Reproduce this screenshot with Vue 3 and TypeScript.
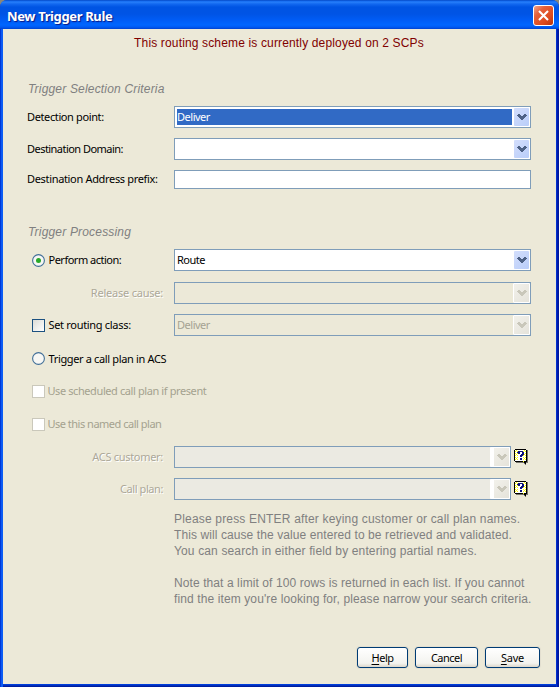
<script setup lang="ts">
import { ref } from 'vue'

interface Notice {
  text: string
  spacing: string
}

const action = ref<'perform' | 'plan'>('perform')
const notices: Notice[] = [
  { text: 'Please press ENTER after keying customer or call plan names.', spacing: 'n1' },
  { text: 'This will cause the value entered to be retrieved and validated.', spacing: 'n2' },
  { text: 'You can search in either field by entering partial names.', spacing: 'n3' },
  { text: '', spacing: '' },
  { text: 'Note that a limit of 100 rows is returned in each list. If you cannot', spacing: 'n4' },
  { text: "find the item you're looking for, please narrow your search criteria.", spacing: 'n5' },
]
const arrow = 'M1 0h2v1h1v1h2V1h1V0h2v1h1v1H9v1H8v1H7v1H6v1H4V5H3V4H2V3H1V2H0V1h1z'
</script>

<template>
  <div class="window">
    <header class="titlebar">
      <span class="title">New Trigger Rule</span>
      <button class="close" aria-label="Close">
        <svg width="11" height="11" viewBox="0 0 11 11"><path d="M1 1l9 9M10 1l-9 9" stroke="#fff" stroke-width="2.1" /></svg>
      </button>
    </header>
    <main class="body">
      <p class="status"><span>This routing scheme is currently deployed on 2 SCPs</span></p>

      <h2 class="section first"><span>Trigger Selection Criteria</span></h2>
      <div class="row r1">
        <label class="label"><span class="t-det">Detection point:</span></label>
        <div class="combo"><span class="value selected">Deliver</span><i class="drop"><svg width="10" height="6" viewBox="0 0 10 6"><path :d="arrow" /></svg></i></div>
      </div>
      <div class="row r2">
        <label class="label"><span class="t-dom">Destination Domain:</span></label>
        <div class="combo"><span class="value"></span><i class="drop"><svg width="10" height="6" viewBox="0 0 10 6"><path :d="arrow" /></svg></i></div>
      </div>
      <div class="row r3">
        <label class="label"><span class="t-pre">Destination Address prefix:</span></label>
        <div class="entry"></div>
      </div>

      <h2 class="section second"><span>Trigger Processing</span></h2>
      <div class="row r4">
        <div class="option" @click="action = 'perform'">
          <svg class="mark" width="13" height="13" viewBox="0 0 13 13"><circle cx="6.5" cy="6.5" r="5.9" fill="#f7f7f4" stroke="#416f98" stroke-width="1.1" /><circle v-if="action === 'perform'" cx="6.5" cy="6.5" r="2.5" fill="#29a929" /></svg>
          <span class="t-perf">Perform action:</span>
        </div>
        <div class="combo"><span class="value">Route</span><i class="drop"><svg width="10" height="6" viewBox="0 0 10 6"><path :d="arrow" /></svg></i></div>
      </div>
      <div class="row r5">
        <label class="label right embossed"><span class="t-rel">Release cause:</span></label>
        <div class="combo off"><span class="value"></span><i class="drop"><svg width="10" height="6" viewBox="0 0 10 6"><path :d="arrow" /></svg></i></div>
      </div>
      <div class="row r6">
        <div class="option"><i class="mark check"></i><span class="t-set">Set routing class:</span></div>
        <div class="combo off"><span class="value">Deliver</span><i class="drop"><svg width="10" height="6" viewBox="0 0 10 6"><path :d="arrow" /></svg></i></div>
      </div>
      <div class="row r7">
        <div class="option wide" @click="action = 'plan'">
          <svg class="mark" width="13" height="13" viewBox="0 0 13 13"><circle cx="6.5" cy="6.5" r="5.9" fill="#f7f7f4" stroke="#416f98" stroke-width="1.1" /><circle v-if="action === 'plan'" cx="6.5" cy="6.5" r="2.5" fill="#29a929" /></svg>
          <span class="t-trig">Trigger a call plan in ACS</span>
        </div>
      </div>
      <div class="row r8"><div class="option wide disabled"><i class="mark check"></i><span class="t-sch">Use scheduled call plan if present</span></div></div>
      <div class="row r9"><div class="option wide disabled"><i class="mark check"></i><span class="t-nam">Use this named call plan</span></div></div>
      <div v-for="name in ['ACS customer:', 'Call plan:']" :key="name" class="row plan">
        <label class="label right embossed"><span :class="name === 'Call plan:' ? 't-call' : 't-acs'">{{ name }}</span></label>
        <div class="combo off short"><span class="value"></span><i class="drop"><svg width="10" height="6" viewBox="0 0 10 6"><path :d="arrow" /></svg></i></div>
        <svg class="help" width="14" height="16" viewBox="0 0 14 16" shape-rendering="crispEdges">
          <path d="M2 1h12v13h-2v2h-1v-1h-1v-1H2z" fill="#77756b" />
          <path d="M1 0h11v1h1v12h-1v2h-1v-1h-1v-1H1v-1H0V1h1z" fill="#000" />
          <path d="M1 1h11v11H1z" fill="#fff" />
          <path d="M1.5 2v10M3.5 2v10M9.5 2v10M11.5 2v10" stroke="#ffff00" stroke-dasharray="1 1" />
          <path d="M2.5 1v10M10.5 1v10" stroke="#ffff00" stroke-dasharray="1 3" />
          <path d="M9 12h1v1H9z" fill="#ff0" />
          <path d="M4 2h5v1h1v3H9v1H8v1H6V6h1V5h1V3H6v2H4V4H3V3h1zM6 9h2v2H6z" fill="#0b1280" />
        </svg>
      </div>

      <div class="notices">
        <p v-for="(n, i) in notices" :key="i"><span :class="n.spacing">{{ n.text }}</span></p>
      </div>

      <footer class="buttons">
        <button class="btn b-help"><span><u>H</u>elp</span></button>
        <button class="btn b-cancel"><span>Cancel</span></button>
        <button class="btn b-save"><span><u>S</u>ave</span></button>
      </footer>
    </main>
  </div>
</template>

<style>
body { margin: 0; background: #8b8778; }
</style>

<style scoped>
* { box-sizing: border-box; }
p, h2 { margin: 0; font-weight: normal; }
span { white-space: nowrap; }
.window {
  width: 559px; height: 687px; display: flex; flex-direction: column;
  font: 11px/16px "Noto Sans", sans-serif; color: #000;
  background: linear-gradient(90deg, #0028c4 0, #0048e8 1px, #166aff 2px, #0050ea 3px, #0050ea 555px, #0042e8 556px, #001db8 557px, #001590 559px);
  border-radius: 7px 7px 0 0; overflow: hidden;
}
.titlebar {
  height: 29px; flex: none; display: flex; justify-content: space-between; padding: 5px 5px 0 7px;
  background: linear-gradient(#0847bd 0, #0f65ed 1px, #287ffa 2px, #1268f0 4px, #0054e3 7px, #0054e5 14px, #005cf5 20px, #0066ff 25px, #005bf4 27px, #0042d0 29px);
}
.title { font: bold 13px/22px "Noto Sans", sans-serif; color: #fff; text-shadow: 1px 1px 1px #0a1883; letter-spacing: -.36px; }
.close {
  width: 21px; height: 21px; padding: 0; display: grid; place-items: center;
  border: 1px solid #fff; border-radius: 3px;
  background: linear-gradient(135deg, #f0a48b, #e5603a 30%, #dd4a1e 70%, #b8330c);
}
.body {
  flex: 1; margin: 0 3px; padding: 0 24px; display: flex; flex-direction: column;
  background: linear-gradient(#0046e8, #001590) bottom / 100% 3px no-repeat, #ece9d8;
}
.status { height: 16px; margin-top: 6px; text-align: center; font: 12px/16px "Liberation Sans", sans-serif; color: #800000; letter-spacing: .15px; padding-right: 1px; }
.section { height: 16px; font: italic 12px/16px "Liberation Sans", sans-serif; color: #808080; padding-left: 1px; letter-spacing: .18px; }
.first { margin-top: 30px; }
.second { margin-top: 35px; }
.row { display: flex; height: 22px; flex: none; }
.r1 { margin-top: 9px; }
.r2, .r3 { margin-top: 10px; }
.r3 { height: 19px; }
.r4 { margin-top: 9px; }
.r5 { margin-top: 11px; }
.r6 { margin-top: 10px; }
.r7, .r8, .r9 { height: 21px; margin-top: 12px; }
.plan { margin-top: 10px; }
.r9 + .plan { margin-top: 11px; }
.label { flex: none; width: 147px; line-height: 22px; }
.r3 .label { line-height: 18px; }
.right { padding-right: 11px; text-align: right; }
.embossed { color: #aca899; text-shadow: 1px 1px 0 #fff; }
.option { flex: none; width: 147px; padding-left: 5px; display: flex; gap: 3.5px; line-height: 21px; }
.option.wide { width: 400px; }
.mark { flex: none; width: 13px; height: 13px; margin-top: 5px; }
.r7 .mark, .r8 .mark, .r9 .mark { margin-top: 4px; }
.check { border: 1px solid #1c5180; background: linear-gradient(135deg, #dcdcd7, #fff); }
.disabled { color: #a4a28f; gap: 2.4px; }
.disabled .check { border-color: #cac8bb; background: #fff; }
.disabled span { line-height: 20px; }
.combo { width: 357px; height: 22px; border: 1px solid #7f9db9; background: #fff; display: flex; padding: 2px 1px 2px 2px; }
.entry { width: 357px; height: 19px; border: 1px solid #7f9db9; background: #fff; }
.short { width: 337px; }
.value { flex: 1; height: 16px; line-height: 16px; margin-right: 2px; letter-spacing: -.48px; }
.selected { background: #316ac5; color: #fff; }
.drop { width: 15px; height: 18px; margin-top: -1px; border-radius: 1px; background: linear-gradient(135deg, #d3defc, #b9cdf9); display: grid; place-items: center; }
.drop svg { fill: #4d6185; display: block; }
.off { background: #ece9d8; color: #a5a393; padding-right: 0; padding-top: 0; padding-bottom: 0; }
.off .value { margin: 2px 0 0; }
.off .drop { box-sizing: content-box; width: 15px; height: 18px; margin: 0; border: 1px solid #fff; background: linear-gradient(135deg, #f2f1eb, #e5e3da); }
.off .drop svg { fill: #c9c7ba; }
.short { background: #ebeae2; }
.short .drop { border-left-width: 4px; }
.help { margin: 3px 0 0 3px; }
.t-det { letter-spacing: -.38px; }
.t-dom { letter-spacing: -.54px; }
.t-pre { letter-spacing: -.33px; }
.t-perf { letter-spacing: -.5px; }
.t-rel { letter-spacing: -.22px; }
.t-set { letter-spacing: -.31px; }
.t-trig { letter-spacing: -.35px; }
.t-sch { letter-spacing: -.4px; }
.t-nam { letter-spacing: -.49px; }
.t-acs { letter-spacing: -.3px; }
.t-call { letter-spacing: -.42px; }
.notices { margin-top: 11px; padding-left: 147px; font: 12px/16px "Liberation Sans", sans-serif; color: #808080; }
.notices p { height: 16px; }
.n1 { letter-spacing: .18px; }
.n2 { letter-spacing: .09px; }
.n3 { letter-spacing: .14px; }
.n4 { letter-spacing: .09px; }
.n5 { letter-spacing: .11px; }
.buttons { display: flex; justify-content: flex-end; gap: 7px; margin-top: 40px; margin-right: -8px; }
.btn {
  height: 21px; padding: 0; border: 1px solid #003c74; border-radius: 3px; color: #000;
  background: linear-gradient(#fff, #f3f3ef 80%, #dcd7cb); font: 11px/18px "Noto Sans", sans-serif;
  box-shadow: 0 0 0 1px #e3dfd0; letter-spacing: -.5px;
}
.b-help { width: 51px; }
.b-cancel { width: 63px; }
.b-save { width: 55px; letter-spacing: -.2px; }
u { text-underline-offset: 2px; }
</style>
